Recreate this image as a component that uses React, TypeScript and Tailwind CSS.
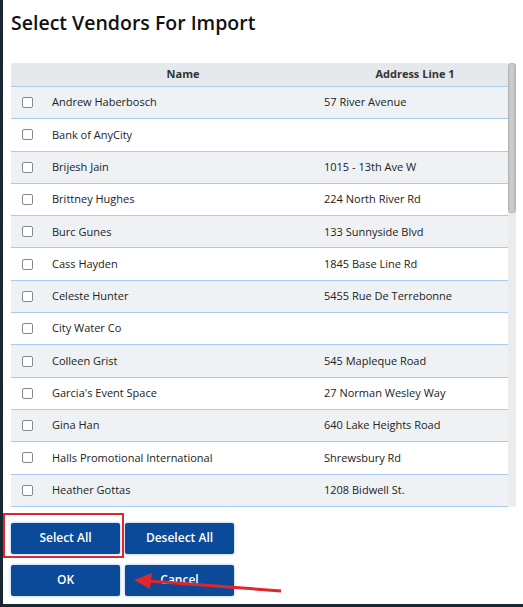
import type { ReactNode } from "react";

type Vendor = { name: string; address: string };

const vendors: Vendor[] = [
  { name: "Andrew Haberbosch", address: "57 River Avenue" },
  { name: "Bank of AnyCity", address: "" },
  { name: "Brijesh Jain", address: "1015 - 13th Ave W" },
  { name: "Brittney Hughes", address: "224 North River Rd" },
  { name: "Burc Gunes", address: "133 Sunnyside Blvd" },
  { name: "Cass Hayden", address: "1845 Base Line Rd" },
  { name: "Celeste Hunter", address: "5455 Rue De Terrebonne" },
  { name: "City Water Co", address: "" },
  { name: "Colleen Grist", address: "545 Mapleque Road" },
  { name: "Garcia's Event Space", address: "27 Norman Wesley Way" },
  { name: "Gina Han", address: "640 Lake Heights Road" },
  { name: "Halls Promotional International", address: "Shrewsbury Rd" },
  { name: "Heather Gottas", address: "1208 Bidwell St." },
];

const font = { fontFamily: '"Open Sans", "Liberation Sans", sans-serif' };

function ActionButton({ children }: { children: ReactNode }) {
  return (
    <button className="h-[31px] w-[109px] rounded-[2px] bg-[#0b4a98] text-[12px] font-semibold text-white shadow-[0_0_3px_rgba(80,140,220,0.6)]">
      {children}
    </button>
  );
}

function VendorRow({ vendor, index }: { vendor: Vendor; index: number }) {
  return (
    <div
      className={`flex h-[32.3px] items-center border-b border-[#a9cbf2] text-[11px] text-[#222] ${
        index % 2 === 0 ? "bg-[#eff2f4]" : "bg-white"
      }`}
    >
      <div className="flex w-[33px] justify-center">
        <span className="block h-[11px] w-[11px] rounded-[2px] border border-[#888] bg-white" />
      </div>
      <div className="w-[278px] pl-[8px]">{vendor.name}</div>
      <div className="flex-1 pl-[2px]">{vendor.address}</div>
    </div>
  );
}

export default function App() {
  return (
    <div className="h-[607px] w-[523px] bg-[#1b2633]" style={font}>
      <div className="relative ml-[3px] h-[604px] bg-white">
        <h1 className="pl-[8px] pt-[9px] text-[19.5px] font-semibold leading-[28px] text-[#111]">
          Select Vendors For Import
        </h1>

        <div className="ml-[8px] mt-[26px] flex w-[505px]">
          <div className="flex-1">
            <div className="flex h-[24px] items-center border-b border-[#a9cbf2] bg-[#e6e9ec] text-[11px] font-bold text-[#333]">
              <div className="w-[33px]" />
              <div className="w-[278px] text-center">Name</div>
              <div className="flex-1 text-center">Address Line 1</div>
            </div>
            {vendors.map((v, i) => (
              <VendorRow key={v.name} vendor={v} index={i} />
            ))}
          </div>
          {/* scrollbar */}
          <div className="w-[8px] rounded-[2px] bg-[#ececec]">
            <div className="h-[150px] rounded-[3px] border border-[#b5b5b5] bg-gradient-to-r from-[#c2c2c2] via-[#d0d0d0] to-[#bdbdbd]" />
          </div>
        </div>

        <div className="ml-[8px] mt-[16px] flex flex-col gap-[11px]">
          <div className="flex gap-[5px]">
            <ActionButton>Select All</ActionButton>
            <ActionButton>Deselect All</ActionButton>
          </div>
          <div className="flex gap-[5px]">
            <ActionButton>OK</ActionButton>
            <ActionButton>Cancel</ActionButton>
          </div>
        </div>

        {/* highlight box */}
        <div className="absolute left-[0px] top-[513px] h-[45px] w-[121px] border-2 border-[#e0262a]" />

        {/* pointer arrow */}
        <svg className="absolute left-[125px] top-[570px]" width="160" height="26" viewBox="0 0 160 26">
          <line x1="153" y1="21" x2="20" y2="11" stroke="#e0262a" strokeWidth="3" />
          <polygon points="6,10 24,3 22,19" fill="#e0262a" />
        </svg>
      </div>
    </div>
  );
}
